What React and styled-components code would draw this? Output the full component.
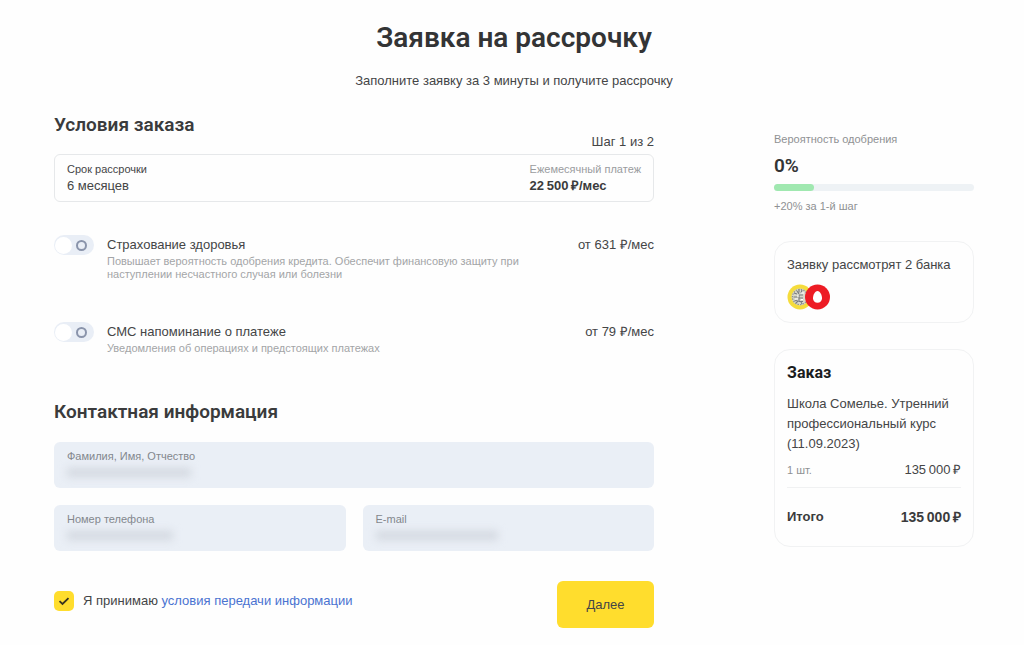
import React, { useState } from "react";
import styled, { createGlobalStyle } from "styled-components";

const ADDONS = [
  {
    id: "health",
    title: "Страхование здоровья",
    text: "Повышает вероятность одобрения кредита. Обеспечит финансовую защиту при наступлении несчастного случая или болезни",
    price: "от 631 ₽/мес",
  },
  {
    id: "sms",
    title: "СМС напоминание о платеже",
    text: "Уведомления об операциях и предстоящих платежах",
    price: "от 79 ₽/мес",
  },
];

const App = () => {
  const [addons, setAddons] = useState({ health: false, sms: false });
  const [agreed, setAgreed] = useState(true);
  const progress = 20;

  const toggleAddon = (id) => {
    setAddons({ ...addons, [id]: !addons[id] });
  };

  return (
    <>
      <GlobalStyle />
      <Page>
        <Header>
          <Title>Заявка на рассрочку</Title>
          <Subtitle>Заполните заявку за 3 минуты и получите рассрочку</Subtitle>
        </Header>
        <Columns>
          <Form onSubmit={(e) => e.preventDefault()}>
            <SectionTitle>Условия заказа</SectionTitle>
            <Step>Шаг 1 из 2</Step>
            <TermBox>
              <TermField>
                <TermLabel htmlFor="term">Срок рассрочки</TermLabel>
                <TermSelect id="term">
                  <option>6 месяцев</option>
                </TermSelect>
              </TermField>
              <Payment>
                <PaymentLabel>Ежемесячный платеж</PaymentLabel>
                <PaymentValue>22&#8201;500&#8201;₽/мес</PaymentValue>
              </Payment>
            </TermBox>

            <Addons>
              {ADDONS.map((item) => (
                <Addon key={item.id}>
                  <Switch
                    type="checkbox"
                    role="switch"
                    id={item.id}
                    checked={addons[item.id]}
                    onChange={() => toggleAddon(item.id)}
                  />
                  <div>
                    <AddonTitle htmlFor={item.id}>{item.title}</AddonTitle>
                    <AddonText>{item.text}</AddonText>
                  </div>
                  <AddonPrice>{item.price}</AddonPrice>
                </Addon>
              ))}
            </Addons>

            <SectionTitle>Контактная информация</SectionTitle>
            <Fields>
              <Field $wide>
                <FieldLabel htmlFor="name">Фамилия, Имя, Отчество</FieldLabel>
                <FieldInput id="name" type="text" />
                <HiddenValue $width={124} />
              </Field>
              <Field>
                <FieldLabel htmlFor="phone">Номер телефона</FieldLabel>
                <FieldInput id="phone" type="tel" />
                <HiddenValue $width={106} />
              </Field>
              <Field>
                <FieldLabel htmlFor="email">E-mail</FieldLabel>
                <FieldInput id="email" type="email" />
                <HiddenValue $width={122} />
              </Field>
            </Fields>

            <Footer>
              <Agreement>
                <CheckWrap>
                  <Check
                    type="checkbox"
                    id="agree"
                    checked={agreed}
                    onChange={(e) => setAgreed(e.target.checked)}
                  />
                  {agreed && (
                    <CheckMark viewBox="0 0 20 20">
                      <path d="M5.5 10.2l3 2.8 6-5.8" />
                    </CheckMark>
                  )}
                </CheckWrap>
                <label htmlFor="agree">
                  Я принимаю <Link href="#terms">условия передачи информации</Link>
                </label>
              </Agreement>
              <NextButton type="submit">Далее</NextButton>
            </Footer>
          </Form>

          <Sidebar>
            <Chance>
              <Muted>Вероятность одобрения</Muted>
              <Percent>0%</Percent>
              <Track>
                <Bar style={{ width: `${progress}%` }} />
              </Track>
              <Muted>+20% за 1-й шаг</Muted>
            </Chance>

            <Card>
              <CardText>Заявку рассмотрят 2 банка</CardText>
              <Banks viewBox="0 0 44 26">
                <circle cx="13" cy="13" r="12.5" fill="#f5dc3c" />
                <circle cx="13" cy="13" r="8.5" fill="#d9d8c8" />
                <circle cx="13" cy="13" r="7.6" fill="none" stroke="#8f928f" strokeWidth="1.2" strokeDasharray="1.4 1.2" />
                <path
                  d="M7 9l3 1M6.5 13h4M7.5 17l3-1M10 7l2 3M12 5.5v3M15 6l-1 3M12 11h4M12 11v7M12 14h4M12 17.5h4M9 19l2-2M15 20l-1-2"
                  fill="none"
                  stroke="#777b80"
                  strokeWidth="1.1"
                />
                <path d="M10 12h2M14 9h3M8 15h3M14 15.5h2" fill="none" stroke="#ffffff" strokeWidth="1.2" />
                <circle cx="30.5" cy="13" r="12.5" fill="#ed1c24" />
                <path d="M30.5 7c2.6 0 4.5 4 4.5 7.2 0 2.7-1.900 4.600-4.500 4.600s-4.500-1.900-4.500-4.600C26 11 27.900 7 30.500 7z" fill="#ffffff" />
              </Banks>
            </Card>

            <Card>
              <OrderTitle>Заказ</OrderTitle>
              <OrderName>Школа Сомелье. Утренний профессиональный курс (11.09.2023)</OrderName>
              <OrderRow>
                <Muted>1 шт.</Muted>
                <span>135&#8201;000&#8201;₽</span>
              </OrderRow>
              <TotalRow>
                <span>Итого</span>
                <Total>135&#8201;000&#8201;₽</Total>
              </TotalRow>
            </Card>
          </Sidebar>
        </Columns>
      </Page>
    </>
  );
};

const GlobalStyle = createGlobalStyle`
  *, *::before, *::after {
    box-sizing: border-box;
  }

  body {
    margin: 0;
    background: #fefefe;
    color: #444546;
    font-family: "Liberation Sans", Arial, sans-serif;
    font-size: 13px;
    line-height: 16px;
  }

  h1, h2, h3, p {
    margin: 0;
  }

  input, select, button {
    font: inherit;
    color: inherit;
  }
`;

const Page = styled.main`
  padding: 20px 50px 16px 54px;
`;

const Header = styled.header`
  text-align: center;
`;

const Title = styled.h1`
  font-family: Roboto, sans-serif;
  font-size: 28px;
  font-weight: 600;
  line-height: 36px;
  color: #333435;
`;

const Subtitle = styled.p`
  margin-top: 17px;
`;

const Columns = styled.div`
  display: grid;
  grid-template-columns: minmax(0, 3fr) minmax(0, 1fr);
  column-gap: 120px;
  margin-top: 24px;
`;

const Form = styled.form`
  display: flex;
  flex-direction: column;
`;

const SectionTitle = styled.h2`
  font-family: Roboto, sans-serif;
  font-size: 19px;
  font-weight: 600;
  line-height: 24px;
  color: #3a3b3c;
`;

const Step = styled.p`
  margin-top: -3px;
  text-align: right;
`;

const TermBox = styled.div`
  display: flex;
  justify-content: space-between;
  margin-top: 4px;
  padding: 5px 12px 7px;
  border: 1px solid #e6e8ea;
  border-radius: 6px;
`;

const TermField = styled.div`
  display: flex;
  flex: 1;
  flex-direction: column;
`;

const TermLabel = styled.label`
  font-size: 11px;
  line-height: 18px;
`;

const TermSelect = styled.select`
  appearance: none;
  height: 16px;
  padding: 0;
  border: 0;
  background: none;
  outline: none;
`;

const Payment = styled.div`
  display: flex;
  flex-direction: column;
`;

const PaymentLabel = styled.span`
  font-size: 11px;
  line-height: 18px;
  color: #9a9c9e;
`;

const PaymentValue = styled.strong`
  color: #3a3b3c;
`;

const Addons = styled.div`
  display: flex;
  flex-direction: column;
  gap: 41px;
  margin: 33px 0 45px;
`;

const Addon = styled.div`
  display: grid;
  grid-template-columns: 40px minmax(0, 1fr) auto;
  column-gap: 13px;
  align-items: start;
`;

const Switch = styled.input`
  appearance: none;
  display: flex;
  align-items: center;
  justify-content: space-between;
  width: 40px;
  height: 20px;
  margin: 0;
  padding: 0 7px 0 1px;
  border-radius: 10px;
  background: #e9eef6;
  cursor: pointer;

  &::before {
    content: "";
    width: 17px;
    height: 17px;
    border-radius: 50%;
    background: #ffffff;
  }

  &::after {
    content: "";
    width: 11px;
    height: 11px;
    border: 2px solid #8a94ab;
    border-radius: 50%;
  }

  &:checked {
    flex-direction: row-reverse;
    padding: 0 1px 0 7px;
    background: #ffdd2d;
  }
`;

const AddonTitle = styled.label`
  display: block;
  line-height: 20px;
`;

const AddonText = styled.p`
  max-width: 420px;
  font-size: 11px;
  line-height: 13px;
  color: #a3a5a7;
`;

const AddonPrice = styled.span`
  line-height: 20px;
`;

const Fields = styled.div`
  display: grid;
  grid-template-columns: 1fr 1fr;
  gap: 17px;
  margin-top: 18px;
`;

const Field = styled.div`
  position: relative;
  grid-column: ${(props) => (props.$wide ? "1 / -1" : "auto")};
  padding: 5px 13px 7px;
  border-radius: 6px;
  background: #eaeff6;
`;

const FieldLabel = styled.label`
  display: block;
  font-size: 11px;
  line-height: 18px;
  color: #83878d;
`;

const FieldInput = styled.input`
  display: block;
  width: 100%;
  height: 16px;
  padding: 0;
  border: 0;
  background: none;
  outline: none;
`;

const HiddenValue = styled.span`
  position: absolute;
  left: 13px;
  bottom: 11px;
  width: ${(props) => props.$width}px;
  height: 9px;
  background: #d3d8e0;
  filter: blur(4px);
  pointer-events: none;
`;

const Footer = styled.div`
  display: flex;
  justify-content: space-between;
  margin-top: 30px;
`;

const Agreement = styled.div`
  display: flex;
  gap: 9px;
  padding-top: 10px;
  line-height: 20px;
`;

const CheckWrap = styled.span`
  position: relative;
  width: 20px;
  height: 20px;
`;

const Check = styled.input`
  appearance: none;
  display: block;
  width: 20px;
  height: 20px;
  margin: 0;
  border-radius: 5px;
  background: #e9eef6;

  &:checked {
    background: #ffdd2d;
  }
`;

const CheckMark = styled.svg`
  position: absolute;
  inset: 0;
  fill: none;
  stroke: #3a3520;
  stroke-width: 1.8;
  pointer-events: none;
`;

const Link = styled.a`
  color: #4a73d1;
  text-decoration: none;
`;

const NextButton = styled.button`
  width: 97px;
  height: 47px;
  border: 0;
  border-radius: 6px;
  background: #ffdd2d;
  cursor: pointer;
`;

const Sidebar = styled.aside`
  display: flex;
  flex-direction: column;
  gap: 26px;
  padding-top: 18px;
`;

const Chance = styled.div`
  display: flex;
  flex-direction: column;
  padding-bottom: 1px;
`;

const Muted = styled.span`
  font-size: 11px;
  color: #8f9193;
`;

const Percent = styled.strong`
  margin: 7px 0 6px;
  font-family: Roboto, sans-serif;
  font-size: 19px;
  font-weight: 600;
  line-height: 24px;
  color: #333435;
`;

const Track = styled.div`
  height: 7px;
  margin-bottom: 7px;
  border-radius: 4px;
  background: #eef2f5;
`;

const Bar = styled.div`
  height: 100%;
  border-radius: 4px;
  background: #a0e8b0;
`;

const Card = styled.section`
  padding: 14px 12px 12px;
  border: 1px solid #f1f2f3;
  border-radius: 16px;
`;

const CardText = styled.p`
  line-height: 18px;
`;

const Banks = styled.svg`
  display: block;
  width: 44px;
  height: 26px;
  margin-top: 10px;
`;

const OrderTitle = styled.h3`
  font-family: Roboto, sans-serif;
  font-size: 16px;
  font-weight: 700;
  line-height: 18px;
  color: #1c1d1e;
`;

const OrderName = styled.p`
  margin-top: 12px;
  line-height: 20px;
`;

const OrderRow = styled.div`
  display: flex;
  justify-content: space-between;
  margin-top: 8px;
  padding-bottom: 9px;
  border-bottom: 1px solid #f0f1f2;
`;

const TotalRow = styled.div`
  display: flex;
  justify-content: space-between;
  padding: 21px 0 9px;
  font-weight: 700;
  color: #3a3b3c;
`;

const Total = styled.strong`
  font-size: 14px;
`;

export default App;
